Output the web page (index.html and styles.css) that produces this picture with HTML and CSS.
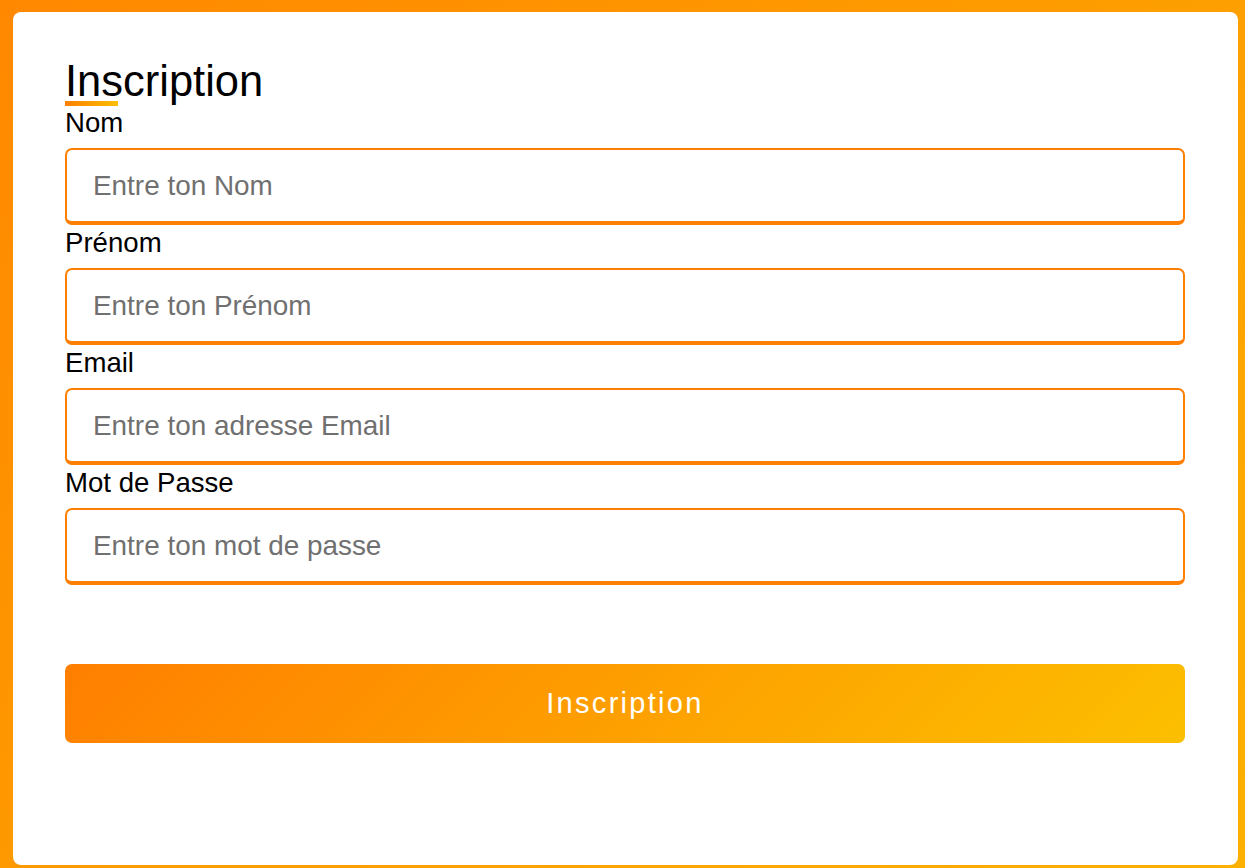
FILE: index.html
```html
<!DOCTYPE html>
<html lang="fr">
<head>
<meta charset="utf-8">
<title>Inscription</title>
<link rel="stylesheet" href="styles.css">
</head>
<body>
<main class="card">
  <h1 class="title">Inscription</h1>
  <form class="form">
    <div class="field">
      <label class="label" for="nom">Nom</label>
      <input class="input" id="nom" type="text" placeholder="Entre ton Nom">
    </div>
    <div class="field">
      <label class="label" for="prenom">Prénom</label>
      <input class="input" id="prenom" type="text" placeholder="Entre ton Prénom">
    </div>
    <div class="field">
      <label class="label" for="email">Email</label>
      <input class="input" id="email" type="email" placeholder="Entre ton adresse Email">
    </div>
    <div class="field">
      <label class="label" for="mdp">Mot de Passe</label>
      <input class="input" id="mdp" type="password" placeholder="Entre ton mot de passe">
    </div>
    <button class="submit" type="submit">Inscription</button>
  </form>
</main>
</body>
</html>
```
FILE: styles.css
```css
* { box-sizing: border-box; }
html, body { height: 100%; }
body {
  margin: 0;
  padding: 12px 7px 3px 13px;
  background: linear-gradient(135deg, #ff8800, #fcb000);
  font-family: "Liberation Sans", Arial, sans-serif;
  overflow: hidden;
}
.card {
  background: #fff;
  border-radius: 8px;
  height: 853px;
  padding: 44px 53px 0 52px;
}
.title {
  position: relative;
  margin: 0;
  font-size: 43.5px;
  font-weight: 400;
  line-height: 50px;
  color: #000;
  display: inline-block;
}
.title::after {
  content: "";
  position: absolute;
  left: 0;
  bottom: 0;
  width: 53px;
  height: 5px;
  background: linear-gradient(90deg, #ff7f00, #fcbf00);
}
.form {
  display: flex;
  flex-direction: column;
  margin-top: 2px;
}
.field {
  display: flex;
  flex-direction: column;
  margin-bottom: 3px;
}
.label {
  font-size: 27.6px;
  line-height: 30px;
  color: #000;
  margin-bottom: 10px;
}
.input {
  height: 77px;
  width: 100%;
  border: 2px solid #ff7f00;
  border-bottom-width: 4px;
  border-radius: 7px;
  padding: 0 26px;
  font-family: "Liberation Sans", Arial, sans-serif;
  font-size: 27.9px;
  color: #000;
  outline: none;
  background: #fff;
}
.input::placeholder { color: #707070; }
.submit {
  margin-top: 76px;
  height: 79px;
  width: 100%;
  border: none;
  border-radius: 7px;
  background: linear-gradient(135deg, #ff7f00, #fcbf00);
  color: #fff;
  font-family: "Liberation Sans", Arial, sans-serif;
  font-size: 29px;
  letter-spacing: 2.3px;
}
```
